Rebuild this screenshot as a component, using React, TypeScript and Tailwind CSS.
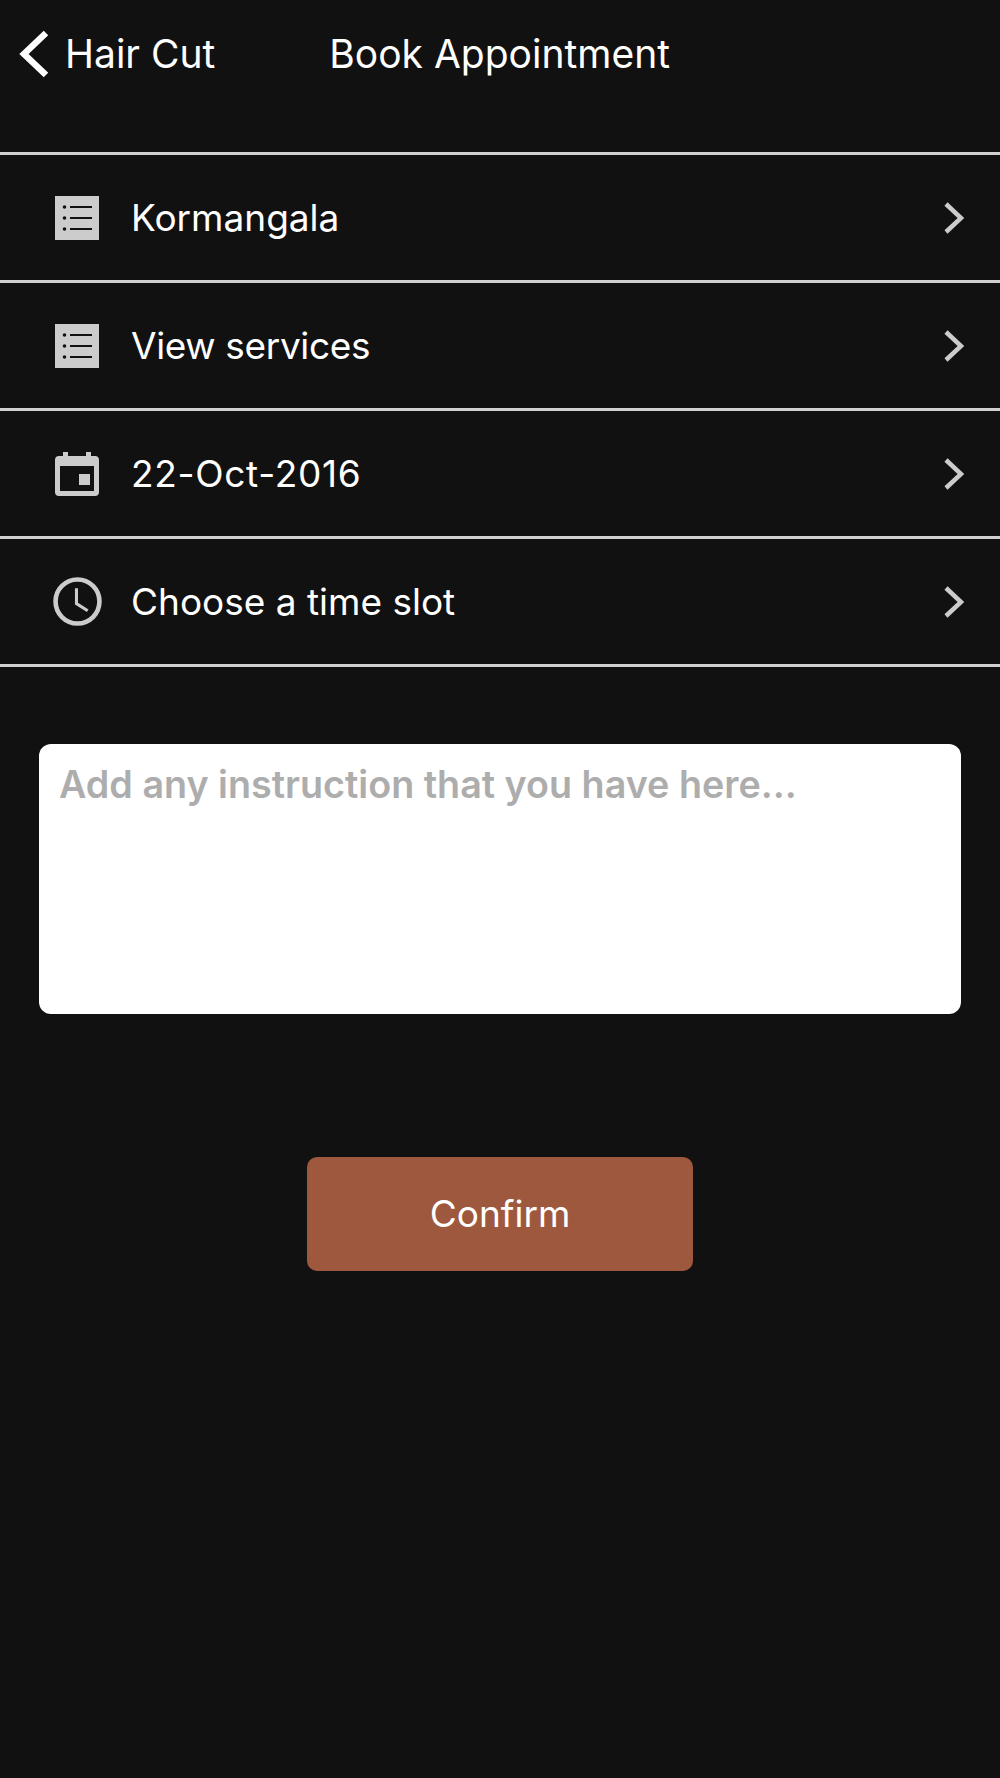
import { ReactNode } from 'react';

// Book Appointment screen

function ListIcon() {
  return (
    <svg width="44" height="44" viewBox="0 0 44 44" aria-hidden="true">
      <rect width="44" height="44" fill="#cccccc" />
      <g fill="#111111">
        <circle cx="9.5" cy="11" r="1.8" />
        <circle cx="9.5" cy="22" r="1.8" />
        <circle cx="9.5" cy="33" r="1.8" />
        <rect x="15" y="10" width="22" height="2" />
        <rect x="15" y="21" width="22" height="2" />
        <rect x="15" y="32" width="22" height="2" />
      </g>
    </svg>
  );
}

function CalendarIcon() {
  return (
    <svg width="44" height="44" viewBox="0 0 44 44" aria-hidden="true">
      <path
        fill="#cccccc"
        d="M8 0h5v4h18V0h5v4h4a4 4 0 0 1 4 4v32a4 4 0 0 1-4 4H4a4 4 0 0 1-4-4V8a4 4 0 0 1 4-4h4z"
      />
      <rect x="5" y="14" width="34" height="25" fill="#111111" />
      <rect x="24" y="22" width="11" height="11" fill="#cccccc" />
    </svg>
  );
}

function ClockIcon() {
  return (
    <svg width="49" height="49" viewBox="0 0 48 48" fill="none" aria-hidden="true">
      <circle cx="24" cy="24" r="21.5" stroke="#cccccc" strokeWidth="4.5" />
      <path d="M23 11v15l11 7" stroke="#cccccc" strokeWidth="3" />
    </svg>
  );
}

function Chevron() {
  return (
    <svg width="20" height="32" viewBox="0 0 20 32" fill="none" aria-hidden="true">
      <path d="M2 2l15 14L2 30" stroke="#cccccc" strokeWidth="4.5" />
    </svg>
  );
}

function Row({ icon, label, labelClass }: { icon: ReactNode; label: string; labelClass?: string }) {
  return (
    <div className="flex h-[128px] items-center border-b-[3px] border-[#d0d0d0] pr-[36px]">
      <div className="flex w-[131px] shrink-0 justify-center pl-[23px]">{icon}</div>
      <span className={`flex-1 text-[37px] text-white ${labelClass ?? ''}`}>{label}</span>
      <Chevron />
    </div>
  );
}

export default function App() {
  return (
    <div className="h-[1778px] w-full overflow-hidden bg-[#111111] font-['Inter',sans-serif]">
      <header className="relative flex h-[155px] items-start border-b-[3px] border-[#d0d0d0] pt-[30px]">
        <svg className="ml-[18px]" width="32" height="48" viewBox="0 0 32 48" fill="none" aria-hidden="true">
          <path d="M28 3L6 24l22 21" stroke="#ffffff" strokeWidth="6.5" />
        </svg>
        <span className="ml-[15px] text-[39px] leading-[48px] text-white">Hair Cut</span>
        <span className="ml-[114px] text-[39px] leading-[48px] text-white">Book Appointment</span>
      </header>

      <Row icon={<ListIcon />} label="Kormangala" />
      <Row icon={<ListIcon />} label="View services" labelClass="tracking-[-0.35px]" />
      <Row icon={<CalendarIcon />} label="22-Oct-2016" labelClass="tracking-[0.7px]" />
      <Row icon={<ClockIcon />} label="Choose a time slot" />

      <div className="mx-[39px] mt-[77px] h-[270px] rounded-[12px] bg-white px-[20px] pt-[12px]">
        <span className="text-[37.7px] font-semibold text-[#adadad]">Add any instruction that you have here...</span>
      </div>

      <div className="mt-[143px] flex justify-center">
        <button
          type="button"
          className="flex h-[114px] w-[386px] items-center justify-center rounded-[10px] bg-[#9e583d] text-[37px] text-white"
        >
          Confirm
        </button>
      </div>
    </div>
  );
}
